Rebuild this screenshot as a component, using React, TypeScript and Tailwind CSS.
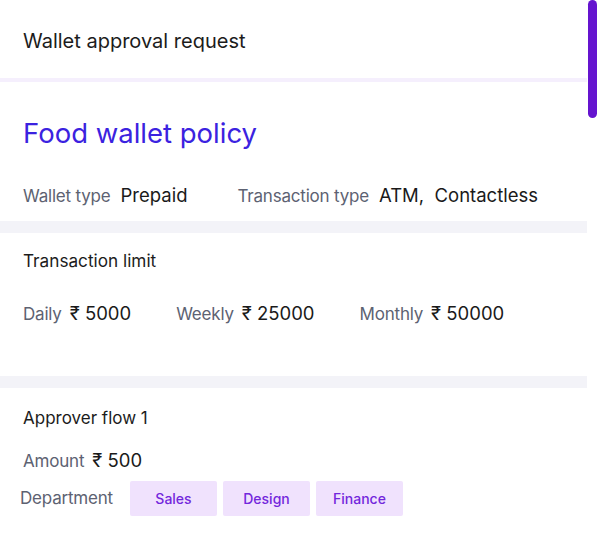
import React from "react";

function Field({ label, value, gap = "ml-2.5" }: { label: string; value: string; gap?: string }) {
  return (
    <div className="flex items-baseline">
      <span className="text-[17px] tracking-[-0.2px] text-[#5d6272]">{label}</span>
      <span className={`${gap} text-[18.5px] text-[#1a1a1a] whitespace-pre`}>{value}</span>
    </div>
  );
}

export default function App() {
  return (
    <div
      className="relative w-[597px] h-[534px] overflow-hidden bg-white"
      style={{ fontFamily: "Inter, 'Noto Sans', sans-serif" }}
    >
      <div className="w-[587px]">
        <div className="h-[78px] flex items-center px-[23px] pt-[3px]">
          <h1 className="text-[20px] text-[#1c1c1c]">Wallet approval request</h1>
        </div>
        <div className="h-[4px] bg-[#f5effd]" />

        <div className="px-[23px] pt-[35px]">
          <h2 className="text-[27.5px] leading-[32px] text-[#3b22e0]">Food wallet policy</h2>
          <div className="mt-[33px] flex items-baseline gap-[50px] h-[39px]">
            <Field label="Wallet type" value="Prepaid" />
            <Field label="Transaction type" value="ATM,  Contactless" />
          </div>
        </div>
        <div className="h-[12px] bg-[#f3f3f8]" />

        <div className="px-[23px] pt-[17px] h-[143px]">
          <h3 className="text-[17.2px] leading-[22px] text-[#1c1c1c]">Transaction limit</h3>
          <div className="mt-[28px] flex items-baseline gap-[45px]">
            <Field label="Daily" value="₹ 5000" gap="ml-2" />
            <Field label="Weekly" value="₹ 25000" gap="ml-2" />
            <Field label="Monthly" value="₹ 50000" gap="ml-2" />
          </div>
        </div>
        <div className="h-[12px] bg-[#f3f3f8]" />

        <div className="px-[23px] pt-[19px]">
          <h3 className="text-[17px] leading-[22px] text-[#1c1c1c]">Approver flow 1</h3>
          <div className="mt-[18px]">
            <Field label="Amount" value="₹ 500" gap="ml-2" />
          </div>
          <div className="mt-[6px] -ml-[3px] flex items-center">
            <span className="text-[17px] tracking-[-0.2px] text-[#5d6272] w-[110px]">Department</span>
            <div className="flex gap-[6px]">
              {["Sales", "Design", "Finance"].map((d) => (
                <span
                  key={d}
                  className="w-[87px] h-[35px] flex items-center justify-center rounded-[2px] bg-[#f0e2fd] text-[14px] font-medium text-[#7327dc]"
                >
                  {d}
                </span>
              ))}
            </div>
          </div>
        </div>
      </div>

      <div className="absolute right-0 top-0 w-[9px] h-[118px] rounded-[5px] bg-[#6514cf]" />
    </div>
  );
}
